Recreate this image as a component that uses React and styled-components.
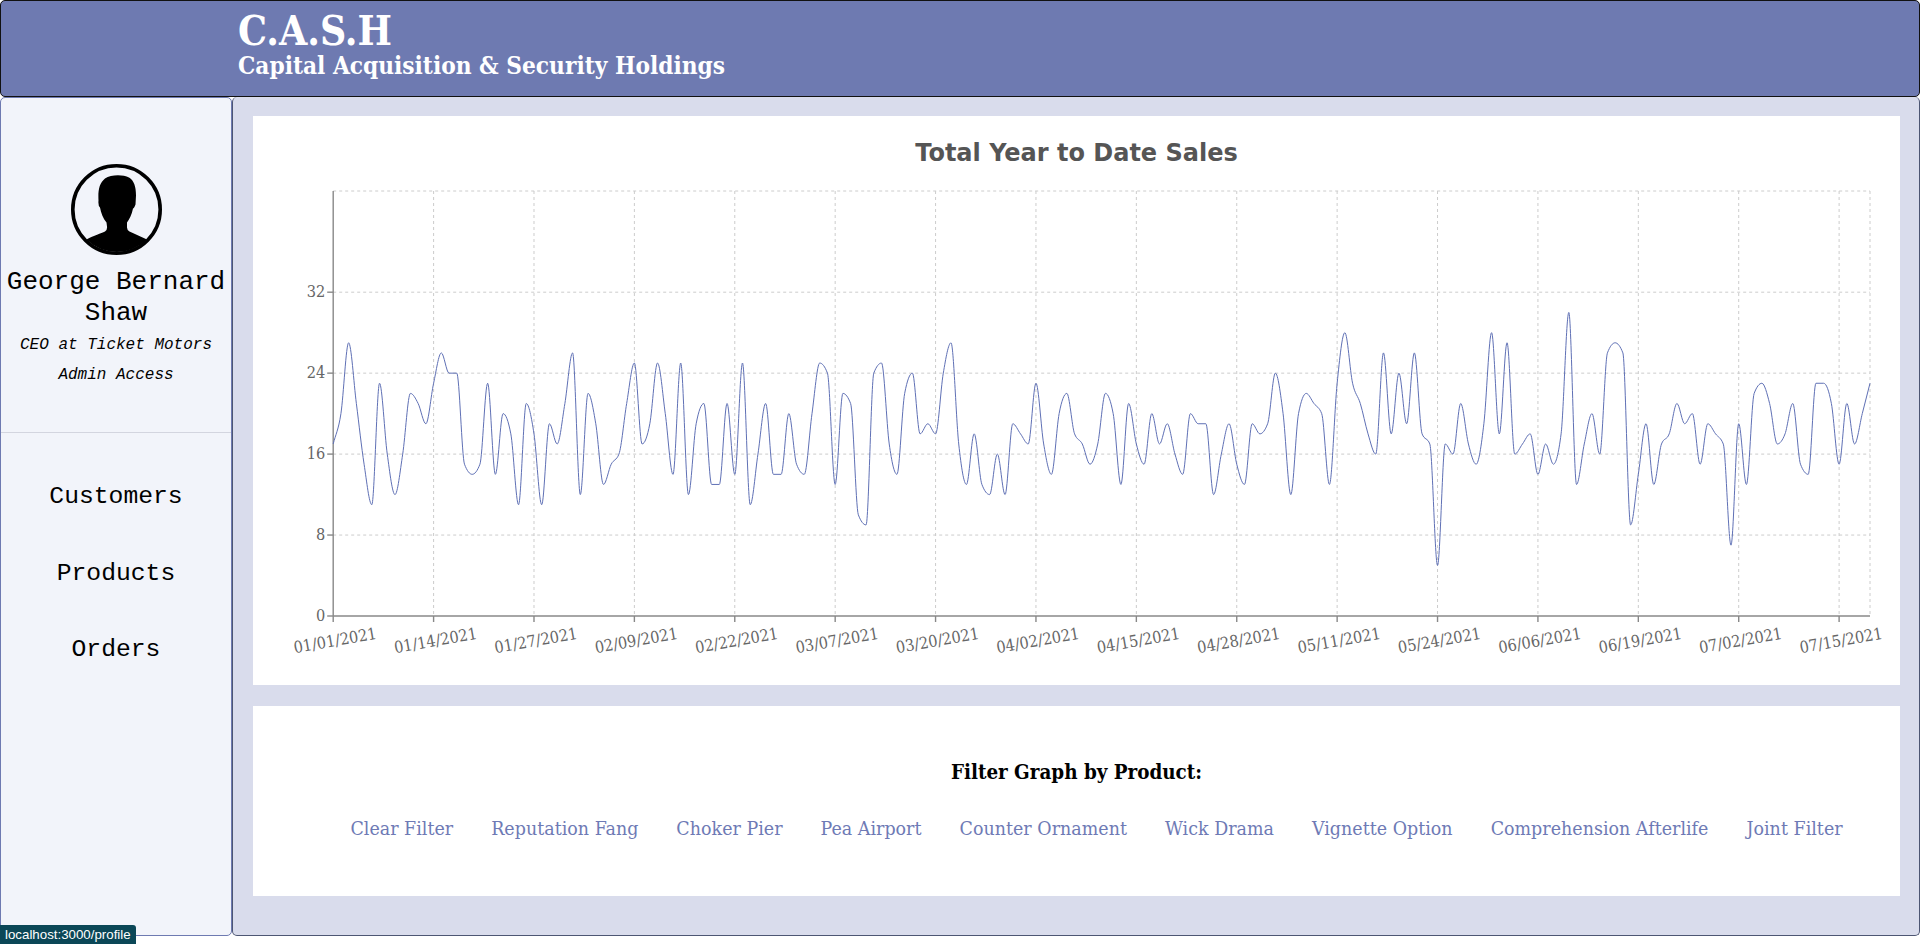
import React from 'react';
import styled, { createGlobalStyle } from 'styled-components';

const SERIF = '"DejaVu Serif Condensed", "Liberation Serif", "Times New Roman", serif';
const MONO = '"Liberation Mono", "Courier New", monospace';

const GlobalStyle = createGlobalStyle`
	* {
		box-sizing: border-box;
	}

	html,
	body {
		margin: 0;
		padding: 0;
		background: #fff;
	}
`;

const Page = styled.div`
	display: flex;
	flex-direction: column;
	height: 936px;
`;

const Header = styled.header`
	flex: 0 0 97px;
	padding: 10px 0 0 237px;
	background-color: #6e7ab1;
	border: 1px solid #111;
	border-radius: 5px;
	color: #fff;
	font-family: ${SERIF};
	font-weight: 700;
`;

const Brand = styled.h1`
	margin: 0;
	font-size: 40.5px;
	line-height: 40px;
`;

const Tagline = styled.h2`
	margin: 0;
	font-size: 24.2px;
	line-height: 30px;
`;

const Body = styled.div`
	flex: 1;
	display: flex;
	min-height: 0;
`;

const Sidebar = styled.aside`
	flex: 0 0 232px;
	display: flex;
	flex-direction: column;
	background-color: #f2f4fa;
	border: 1px solid #6e7ab1;
	border-radius: 5px;
	font-family: ${MONO};
	color: #000;
	text-align: center;
`;

const Profile = styled.div`
	flex: 0 0 335px;
	padding-top: 66px;
	border-bottom: 1px solid #d3d5df;
`;

const Avatar = styled.svg`
	display: block;
	width: 91px;
	height: 91px;
	margin: 0 auto 12px;
`;

const Name = styled.div`
	font-size: 26px;
	line-height: 31px;
	margin-bottom: 1px;
`;

const Role = styled.div`
	font-size: 16px;
	line-height: 30px;
	font-style: italic;
`;

const Nav = styled.nav`
	display: flex;
	flex-direction: column;
	gap: 46.5px;
	padding-top: 48px;
`;

const NavLink = styled.a`
	font-size: 24.7px;
	line-height: 30px;
	color: #000;
	text-decoration: none;
`;

const Main = styled.main`
	flex: 1;
	display: flex;
	flex-direction: column;
	gap: 21px;
	padding: 19px 19px 0 20px;
	background-color: #d9dcec;
	border: 1px solid #4d5673;
	border-top: 0;
	border-radius: 5px;
`;

const ChartCard = styled.section`
	flex: 0 0 569px;
	background-color: #fff;
`;

const ChartTitle = styled.h2`
	margin: 0;
	height: 60px;
	padding-top: 22px;
	font-family: "DejaVu Sans", Verdana, sans-serif;
	font-size: 24px;
	line-height: 30px;
	font-weight: 700;
	color: #555;
	text-align: center;
`;

const ChartSvg = styled.svg`
	display: block;
`;

const TickText = styled.text`
	font-family: ${SERIF};
	font-size: 16.2px;
	fill: #666;
`;

const FilterCard = styled.section`
	flex: 0 0 190px;
	padding-top: 54px;
	background-color: #fff;
	font-family: ${SERIF};
	text-align: center;
`;

const FilterTitle = styled.h4`
	margin: 0;
	font-size: 20.4px;
	line-height: 24px;
	font-weight: 700;
	color: #000;
`;

const FilterList = styled.ul`
	display: flex;
	justify-content: center;
	gap: 38px;
	margin: 33px 0 0;
	padding: 0 0 0 40px;
	list-style: none;
`;

const FilterLink = styled.a`
	font-size: 19.4px;
	line-height: 24px;
	letter-spacing: 0.03px;
	color: #6e7ab5;
	text-decoration: none;
`;

const StatusBubble = styled.div`
	position: fixed;
	left: 0;
	bottom: 0;
	height: 19px;
	padding: 0 5px;
	background-color: #0b4757;
	border-radius: 0 3px 0 0;
	font-family: "Liberation Sans", Arial, sans-serif;
	font-size: 13.3px;
	line-height: 19px;
	color: #fff;
`;

const SALES = [
	17, 20, 27, 21, 15, 11, 23, 16, 12, 16, 22, 21, 19, 23, 26, 24, 24, 15, 14, 15,
	23, 14, 20, 18, 11, 21, 18, 11, 19, 17, 21, 26, 12, 22, 19, 13, 15, 16, 21, 25,
	17, 19, 25, 20, 14, 25, 12, 19, 21, 13, 13, 21, 14, 25, 11, 16, 21, 14, 14, 20,
	15, 14, 20, 25, 24, 13, 22, 21, 10, 9, 24, 25, 17, 14, 22, 24, 18, 19, 18, 24,
	27, 17, 13, 18, 13, 12, 16, 12, 19, 18, 17, 23, 17, 14, 20, 22, 18, 17, 15, 17,
	22, 20, 13, 21, 17, 15, 20, 17, 19, 16, 14, 20, 19, 19, 12, 16, 19, 15, 13, 19,
	18, 19, 24, 20, 12, 20, 22, 21, 20, 13, 23, 28, 23, 21, 18, 16, 26, 18, 24, 19,
	26, 18, 17, 5, 17, 16, 21, 17, 15, 19, 28, 18, 27, 16, 17, 18, 14, 17, 15, 18,
	30, 13, 17, 20, 16, 26, 27, 26, 9, 14, 19, 13, 17, 18, 21, 19, 20, 15, 19, 18,
	17, 7, 19, 13, 22, 23, 21, 17, 18, 21, 15, 14, 23, 23, 21, 15, 21, 17, 20, 23,
];

const PRODUCTS = [
	'Clear Filter',
	'Reputation Fang',
	'Choker Pier',
	'Pea Airport',
	'Counter Ornament',
	'Wick Drama',
	'Vignette Option',
	'Comprehension Afterlife',
	'Joint Filter',
];

const CHART = { width: 1647, height: 509, left: 80.2, right: 1617, top: 15, bottom: 440 };
const X_STEP = (CHART.right - CHART.left) / (SALES.length - 1);
const Y_UNIT = (CHART.bottom - CHART.top) / 42;

const xAt = index => CHART.left + index * X_STEP;
const yAt = value => CHART.bottom - value * Y_UNIT;

const formatDay = index => {
	const date = new Date(Date.UTC(2021, 0, 1 + index));
	const mm = String(date.getUTCMonth() + 1).padStart(2, '0');
	const dd = String(date.getUTCDate()).padStart(2, '0');
	return `${mm}/${dd}/2021`;
};

/* Monotone cubic through the daily points, same as the usual chart "monotone" line. */
const monotonePath = values => {
	const xs = values.map((_, i) => xAt(i));
	const ys = values.map(yAt);
	const slopes = ys.slice(1).map((y, i) => (y - ys[i]) / X_STEP);
	const tangents = ys.map((_, i) => {
		if (i === 0) return slopes[0];
		if (i === ys.length - 1) return slopes[i - 1];
		const a = slopes[i - 1];
		const b = slopes[i];
		if (a * b <= 0) return 0;
		return Math.sign(a) * Math.min(Math.abs(a), Math.abs(b), Math.abs(a + b) / 4) * 2;
	});
	let path = `M${xs[0]},${ys[0]}`;
	for (let i = 1; i < xs.length; i++) {
		const dx = X_STEP / 3;
		path += `C${xs[i - 1] + dx},${ys[i - 1] + tangents[i - 1] * dx} ${xs[i] - dx},${ys[i] - tangents[i] * dx} ${xs[i]},${ys[i]}`;
	}
	return path;
};

function SalesChart() {
	const yTicks = [0, 8, 16, 24, 32];
	const xTicks = Array.from({ length: 16 }, (_, i) => i * 13);
	const { left, right, top, bottom } = CHART;

	return (
		<ChartSvg width={CHART.width} height={CHART.height}>
			<g stroke="#ccc" strokeDasharray="3 3" fill="none">
				{[...yTicks.slice(1), 42].map(v => (
					<line key={v} x1={left} x2={right} y1={yAt(v)} y2={yAt(v)} />
				))}
				{[...xTicks.slice(1), 199].map(d => (
					<line key={d} x1={xAt(d)} x2={xAt(d)} y1={top} y2={bottom} />
				))}
			</g>
			<g stroke="#888" strokeWidth="1.4" fill="none">
				<line x1={left} x2={left} y1={top} y2={bottom} />
				<line x1={left} x2={right} y1={bottom} y2={bottom} />
				{yTicks.map(v => (
					<line key={v} x1={left - 6} x2={left} y1={yAt(v)} y2={yAt(v)} />
				))}
				{xTicks.map(d => (
					<line key={d} x1={xAt(d)} x2={xAt(d)} y1={bottom} y2={bottom + 6} />
				))}
			</g>
			{yTicks.map(v => (
				<TickText key={v} x={left - 8} y={yAt(v) + 5} textAnchor="end">
					{v}
				</TickText>
			))}
			{xTicks.map(d => (
				<TickText
					key={d}
					x={xAt(d) + 2}
					y={bottom + 30}
					textAnchor="middle"
					transform={`rotate(-10 ${xAt(d) + 2} ${bottom + 25})`}
				>
					{formatDay(d)}
				</TickText>
			))}
			<path d={monotonePath(SALES)} fill="none" stroke="#5f70b5" strokeWidth="1" />
		</ChartSvg>
	);
}

function App() {
	return (
		<Page>
			<GlobalStyle />
			<Header>
				<Brand>C.A.S.H</Brand>
				<Tagline>Capital Acquisition &amp; Security Holdings</Tagline>
			</Header>
			<Body>
				<Sidebar>
					<Profile>
						<Avatar viewBox="10 13.5 91 91">
							<circle cx="55.5" cy="59" r="43.7" fill="none" stroke="#000" strokeWidth="3.6" />
							<path d="M25.5 89 C33 85 40 83 44 81 Q46.5 79.5 46 76 L45.5 72 C42 68 40 62 39 57 Q37 55 37.5 50 C37 40 38 33 44 28 C50 24 62 24 68 27 C73 30 75 36 75 45 L74.5 54 Q73 58 72 58 C71 64 68 69 66 72 L66 77 Q66 79.5 68.5 81 L86 89 A43 43 0 0 1 25.5 89 Z" />
						</Avatar>
						<Name>George Bernard Shaw</Name>
						<Role>CEO at Ticket Motors</Role>
						<Role>Admin Access</Role>
					</Profile>
					<Nav>
						<NavLink href="#customers">Customers</NavLink>
						<NavLink href="#products">Products</NavLink>
						<NavLink href="#orders">Orders</NavLink>
					</Nav>
				</Sidebar>
				<Main>
					<ChartCard>
						<ChartTitle>Total Year to Date Sales</ChartTitle>
						<SalesChart />
					</ChartCard>
					<FilterCard>
						<FilterTitle>Filter Graph by Product:</FilterTitle>
						<FilterList>
							{PRODUCTS.map(product => (
								<li key={product}>
									<FilterLink href="#filter">{product}</FilterLink>
								</li>
							))}
						</FilterList>
					</FilterCard>
				</Main>
			</Body>
			<StatusBubble>localhost:3000/profile</StatusBubble>
		</Page>
	);
}

export default App;
